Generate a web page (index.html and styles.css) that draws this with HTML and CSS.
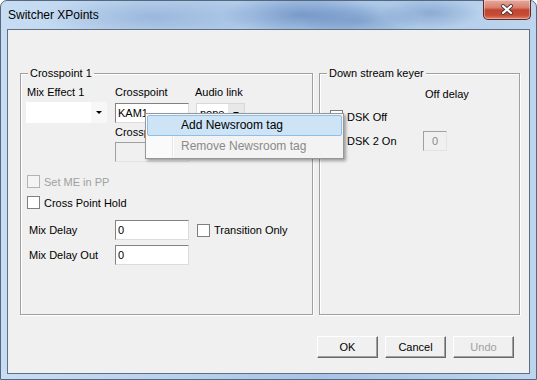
FILE: index.html
```html
<!DOCTYPE html>
<html>
	<head>
		<meta charset="UTF-8">
		<title>Switcher XPoints</title>
		<link rel="stylesheet" href="styles.css">
	</head>
	<body>
		<div class="window">
			<div class="titlebar">
				<span class="title">Switcher XPoints</span>
				<div class="close">
					<svg width="14" height="11" viewBox="0 0 14 11">
						<path d="M3 2 L11 9 M11 2 L3 9" stroke="#4a3a38" stroke-width="4" stroke-linecap="round"/>
						<path d="M3 2 L11 9 M11 2 L3 9" stroke="#fff" stroke-width="2.2" stroke-linecap="round"/>
					</svg>
				</div>
			</div>
			<div class="client">
				<div class="groups">
					<div class="group group-xp">
						<div class="group-title">Crosspoint 1</div>
						<div class="labels">
							<span class="col1">Mix Effect 1</span>
							<span class="col2">Crosspoint</span>
							<span>Audio link</span>
						</div>
						<div class="controls">
							<div class="combo combo-me"><span class="combo-text"></span><span class="combo-btn"><i class="arrow"></i></span></div>
							<div class="textbox tb-xp">KAM1</div>
							<div class="combo combo-audio"><span class="combo-text">none</span><span class="combo-btn grey"><i class="arrow"></i></span></div>
						</div>
						<div class="sublabel">Crosspoint Out</div>
						<div class="textbox tb-xp disabled tb-out"></div>
						<div class="check-row row-setme disabled-text"><span class="check disabled"></span>Set ME in PP</div>
						<div class="check-row row-hold"><span class="check"></span>Cross Point Hold</div>
						<div class="field-row row-delay">
							<span class="field-label">Mix Delay</span>
							<div class="textbox tb-xp">0</div>
							<span class="check check-trans"></span><span class="check-text">Transition Only</span>
						</div>
						<div class="field-row row-delayout">
							<span class="field-label">Mix Delay Out</span>
							<div class="textbox tb-xp">0</div>
						</div>
					</div>
					<div class="group group-dsk">
						<div class="group-title">Down stream keyer</div>
						<div class="offdelay">Off delay</div>
						<div class="check-row row-dskoff"><span class="check"></span>DSK Off</div>
						<div class="field-row row-dsk2">
							<span class="dsk-label"><span class="check"></span><span class="check-text">DSK 2 On</span></span>
							<div class="textbox tb-small disabled">0</div>
						</div>
					</div>
				</div>
				<div class="buttons">
					<div class="btn">OK</div>
					<div class="btn">Cancel</div>
					<div class="btn disabled-text">Undo</div>
				</div>
				<!-- context menu over the crosspoint box -->
				<div class="menu">
					<div class="menu-item active">Add Newsroom tag</div>
					<div class="menu-item disabled-menu">Remove Newsroom tag</div>
				</div>
			</div>
		</div>
	</body>
</html>
```
FILE: styles.css
```css
*{
	margin: 0px;
	padding: 0px;
	box-sizing: border-box;
}
body{
	width: 537px;
	height: 380px;
	overflow: hidden;
	background: #fff;
	font-family: "Liberation Sans", Arial, sans-serif;
	font-size: 11px;
	color: #000;
}
.window{
	width: 537px;
	height: 380px;
	border: 1px solid #56687d;
	border-radius: 7px 7px 0 0;
	display: flex;
	flex-direction: column;
	background:
		radial-gradient(ellipse 110px 22px at 150px 16px, rgba(80,120,180,.30), transparent),
		radial-gradient(ellipse 80px 20px at 300px 14px, rgba(60,100,165,.45), transparent),
		radial-gradient(ellipse 60px 18px at 360px 20px, rgba(70,110,170,.35), transparent),
		radial-gradient(ellipse 50px 16px at 430px 12px, rgba(70,110,170,.35), transparent),
		linear-gradient(to right, #c7ddf3, #b7d0ec 35%, #a7c4e6 60%, #b5cfeb 85%, #bed5ee);
}
.titlebar{
	height: 28px;
	display: flex;
	align-items: flex-start;
}
.title{
	margin: 7px 0 0 7px;
	font-size: 12px;
	line-height: 14px;
	color: #000;
}
.close{
	margin: -1px 5px 0 auto;
	width: 48px;
	height: 20px;
	border: 1px solid #5e2a22;
	border-top: none;
	border-radius: 0 0 5px 5px;
	background: linear-gradient(#e7aa9f, #d8806f 40%, #c2452f 52%, #c54c36 80%, #e0826c);
	box-shadow: inset 0 0 0 1px rgba(255,255,255,.35);
	display: flex;
	align-items: center;
	justify-content: center;
}
.client{
	flex: 1;
	margin: 0 6px 5px 6px;
	border: 1px solid #5f7083;
	background: #f0f0f0;
	position: relative;
}
.groups{
	display: flex;
	gap: 6px;
	margin: 43px 0 0 12px;
}
.group{
	height: 242px;
	border: 1px solid #a0a0a0;
	box-shadow: inset 1px 1px 0 #fff, 1px 1px 0 #fff;
}
.group-xp{
	width: 293px;
}
.group-dsk{
	width: 201px;
}
.group-title{
	width: fit-content;
	margin: -7px 0 0 7px;
	padding: 0 2px;
	background: #f0f0f0;
	line-height: 13px;
}
.labels{
	display: flex;
	margin-top: 6px;
	padding-left: 6px;
	line-height: 13px;
}
.col1{
	width: 88px;
}
.col2{
	width: 80px;
}
.controls{
	display: flex;
	align-items: flex-start;
	margin-top: 3px;
	padding-left: 5px;
}
.combo{
	display: flex;
	background: #fff;
	height: 20px;
}
.combo-me{
	width: 81px;
	height: 21px;
}
.combo-audio{
	width: 49px;
	margin: 1px 0 0 7px;
	border: 1px solid #d8d8d8;
}
.combo-text{
	flex: 1;
	padding: 3px 0 0 3px;
	line-height: 13px;
}
.combo-btn{
	width: 16px;
	background: #f7f7f7;
	display: flex;
	align-items: center;
	justify-content: center;
}
.combo-btn.grey{
	background: #e8e8e8;
}
.arrow{
	width: 0;
	height: 0;
	border-left: 3px solid transparent;
	border-right: 3px solid transparent;
	border-top: 3px solid #000;
}
.textbox{
	height: 20px;
	background: #fff;
	border: 1px solid;
	border-color: #828282 #dcdcdc #dcdcdc #828282;
	padding: 2px 0 0 2px;
	line-height: 14px;
}
.tb-xp{
	width: 74px;
}
.controls .tb-xp{
	margin: 1px 0 0 8px;
}
.textbox.disabled{
	background: #f0f0f0;
	border-color: #a0a0a0 #e3e3e3 #e3e3e3 #a0a0a0;
	color: #8a8a8a;
}
.sublabel{
	margin-top: 3px;
	padding-left: 94px;
	line-height: 13px;
}
.tb-out{
	margin: 3px 0 0 94px;
}
.check-row{
	display: flex;
	align-items: center;
	gap: 4px;
	height: 13px;
	padding-left: 6px;
}
.check{
	display: inline-block;
	width: 13px;
	height: 13px;
	background: #fff;
	border: 1px solid #7f7f7f;
	flex: none;
}
.check.disabled{
	background: #f4f4f4;
	border-color: #b4b4b4;
}
.disabled-text{
	color: #a0a0a0;
}
.row-setme{
	margin-top: 13px;
}
.row-hold{
	margin-top: 8px;
}
.field-row{
	display: flex;
	align-items: center;
	height: 20px;
}
.field-label{
	width: 94px;
	padding-left: 8px;
}
.check-trans{
	margin-left: 8px;
}
.check-text{
	margin-left: 4px;
}
.row-delay{
	margin-top: 11px;
}
.row-delayout{
	margin-top: 5px;
}
.offdelay{
	margin-top: 8px;
	padding-left: 105px;
	line-height: 13px;
}
.row-dskoff{
	margin-top: 9px;
	padding-left: 10px;
}
.row-dsk2{
	margin-top: 8px;
	padding-left: 10px;
}
.dsk-label{
	width: 93px;
	display: flex;
	align-items: center;
}
.tb-small{
	width: 24px;
	text-align: center;
	padding-left: 0;
}
.buttons{
	display: flex;
	justify-content: flex-end;
	gap: 7px;
	margin: 21px 15px 0 0;
}
.btn{
	width: 61px;
	height: 22px;
	line-height: 20px;
	text-align: center;
	background: #f0f0f0;
	border: 1px solid;
	border-color: #fff #696969 #696969 #fff;
	box-shadow: inset -1px -1px 0 #a0a0a0;
}
.menu{
	position: absolute;
	left: 137px;
	top: 83px;
	width: 199px;
	padding: 1px;
	border: 1px solid #979797;
	background: linear-gradient(to right, #fafafa 0 26px, #e6e6e6 26px 27px, #fff 27px 28px, #f3f3f3 28px);
	box-shadow: 2px 2px 3px rgba(0,0,0,.35);
	font-size: 12px;
}
.menu-item{
	height: 21px;
	line-height: 19px;
	padding-left: 33px;
	border: 1px solid transparent;
	border-radius: 2px;
}
.menu-item.active{
	background: #cde4f7;
	border-color: #8ebfe9;
}
.disabled-menu{
	color: #8a8a8a;
}
```
